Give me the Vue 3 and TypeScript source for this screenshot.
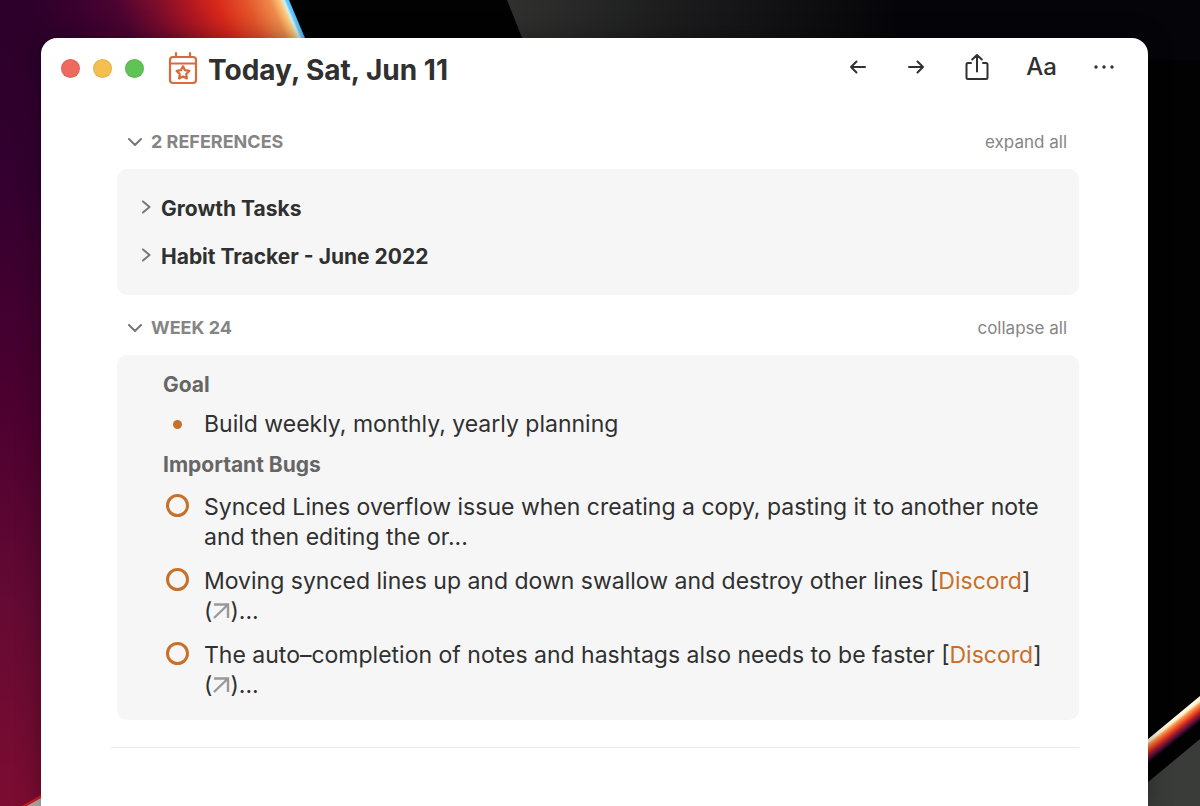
<script setup lang="ts">
import { ref } from 'vue'

interface Task {
  id: string
  text: string
  link: boolean
}

const references: string[] = ['Growth Tasks', 'Habit Tracker - June 2022']

const goals: string[] = ['Build weekly, monthly, yearly planning']

const tasks: Task[] = [
  {
    id: 'task-synced-overflow',
    text: 'Synced Lines overflow issue when creating a copy, pasting it to another note and then editing the or...',
    link: false,
  },
  {
    id: 'task-moving-lines',
    text: 'Moving synced lines up and down swallow and destroy other lines',
    link: true,
  },
  {
    id: 'task-completion',
    text: 'The auto–completion of notes and hashtags also needs to be faster',
    link: true,
  },
]

const done = ref<string[]>([])
const showReferences = ref(true)
const showWeek = ref(true)
</script>

<template>
  <div class="desktop">
    <svg class="wallpaper" viewBox="0 0 1200 806" preserveAspectRatio="none" aria-hidden="true">
      <defs>
        <linearGradient id="base" x1="0" y1="0" x2="0" y2="806" gradientUnits="userSpaceOnUse">
          <stop offset="0" stop-color="#2b0029" />
          <stop offset="0.22" stop-color="#33002f" />
          <stop offset="0.5" stop-color="#4c0030" />
          <stop offset="0.75" stop-color="#640a33" />
          <stop offset="1" stop-color="#7c0c31" />
        </linearGradient>
        <linearGradient id="flare" x1="60" y1="97" x2="289" y2="0" gradientUnits="userSpaceOnUse">
          <stop offset="0" stop-color="#3c0033" stop-opacity="0" />
          <stop offset="0.36" stop-color="#4d0431" />
          <stop offset="0.5" stop-color="#7c0c2b" />
          <stop offset="0.62" stop-color="#ae1722" />
          <stop offset="0.73" stop-color="#d9291b" />
          <stop offset="0.84" stop-color="#e4552b" />
          <stop offset="0.93" stop-color="#ed8b4c" />
          <stop offset="0.965" stop-color="#ffc878" />
          <stop offset="0.98" stop-color="#d8f0f0" />
          <stop offset="0.988" stop-color="#64cfff" />
          <stop offset="1" stop-color="#4cbcf5" />
        </linearGradient>
        <linearGradient id="streak" x1="1148" y1="739" x2="1160" y2="754" gradientUnits="userSpaceOnUse">
          <stop offset="0" stop-color="#fffbe8" />
          <stop offset="0.13" stop-color="#fff0c8" />
          <stop offset="0.25" stop-color="#f89a55" />
          <stop offset="0.45" stop-color="#ee4a20" />
          <stop offset="0.62" stop-color="#b21f26" />
          <stop offset="0.8" stop-color="#57103c" />
          <stop offset="1" stop-color="#020203" />
        </linearGradient>
        <linearGradient id="slab" x1="507" y1="0" x2="900" y2="0" gradientUnits="userSpaceOnUse">
          <stop offset="0" stop-color="#30312f" />
          <stop offset="0.4" stop-color="#1d1d1e" />
          <stop offset="1" stop-color="#050408" />
        </linearGradient>
      </defs>
      <rect width="1200" height="806" fill="#020203" />
      <polygon points="0,0 289,0 628,806 0,806" fill="url(#base)" />
      <polygon points="0,0 289,0 331,100 60,100 0,40" fill="url(#flare)" />
      <polygon points="507,0 1200,0 1200,60 531,60" fill="url(#slab)" />
      <polygon points="1130,754 1200,696 1200,729 1130,787" fill="url(#streak)" />
      <polygon points="1130,797 1200,739 1200,806 1130,806" fill="#3a3c3a" />
      <polygon points="22,806 60,784 60,806" fill="#d31c1c" />
      <polygon points="27,806 60,787 60,806" fill="#a9a9a6" />
    </svg>

    <main class="window">
      <header class="titlebar">
        <div class="lights">
          <button class="light close" type="button" aria-label="Close"></button>
          <button class="light minimise" type="button" aria-label="Minimise"></button>
          <button class="light zoom" type="button" aria-label="Zoom"></button>
        </div>
        <svg class="calendar" viewBox="0 0 30 34" fill="none" stroke="#d96a3b" stroke-width="2.200" aria-hidden="true">
          <rect x="2" y="6" width="26" height="26" rx="3" />
          <path d="M2 12.500H28M8 2V6M22 2V6" stroke-linecap="round" />
          <path
            d="M15 15.200L17 19.200L21.400 19.900L18.200 23L18.900 27.400L15 25.400L11.100 27.400L11.800 23L8.600 19.900L13 19.200Z"
            stroke-linejoin="round"
          />
        </svg>
        <h1 class="title">Today, Sat, Jun 11</h1>
        <nav class="tools" aria-label="Note tools">
          <button class="tool" type="button" aria-label="Back">
            <svg class="arrow" viewBox="0 0 18 18" aria-hidden="true">
              <path d="M16 9H2M7.500 3.500L2 9L7.500 14.500" />
            </svg>
          </button>
          <button class="tool" type="button" aria-label="Forward">
            <svg class="arrow" viewBox="0 0 18 18" aria-hidden="true">
              <path d="M2 9H16M10.500 3.500L16 9L10.500 14.500" />
            </svg>
          </button>
          <button class="tool share" type="button" aria-label="Share">
            <svg viewBox="0 0 24 28" aria-hidden="true">
              <path d="M6 10H3Q1.500 10 1.500 11.500V24.500Q1.500 26 3 26H21Q22.500 26 22.500 24.500V11.500Q22.500 10 21 10H18M12 18.500V2M7.200 6.500L12 2L16.800 6.500" />
            </svg>
          </button>
          <button class="tool letters" type="button">Aa</button>
          <button class="tool more" type="button" aria-label="More">
            <svg viewBox="0 0 20 4" aria-hidden="true">
              <circle cx="2" cy="2" r="1.700" />
              <circle cx="10" cy="2" r="1.700" />
              <circle cx="18" cy="2" r="1.700" />
            </svg>
          </button>
        </nav>
      </header>

      <div class="content">
        <section>
          <div class="section-head">
            <button class="fold" type="button" :aria-expanded="showReferences" @click="showReferences = !showReferences">
              <svg viewBox="0 0 14 8" aria-hidden="true"><path d="M1 1L7 7L13 1" /></svg>
              2 REFERENCES
            </button>
            <button class="all" type="button">expand all</button>
          </div>
          <div v-if="showReferences" class="panel references">
            <button v-for="name in references" :key="name" class="reference" type="button">
              <svg viewBox="0 0 9 14" aria-hidden="true"><path d="M1 1.500L7.500 7L1 12.500" /></svg>
              {{ name }}
            </button>
          </div>
        </section>

        <section>
          <div class="section-head">
            <button class="fold" type="button" :aria-expanded="showWeek" @click="showWeek = !showWeek">
              <svg viewBox="0 0 14 8" aria-hidden="true"><path d="M1 1L7 7L13 1" /></svg>
              WEEK 24
            </button>
            <button class="all" type="button">collapse all</button>
          </div>
          <div v-if="showWeek" class="panel week">
            <h2>Goal</h2>
            <ul class="goals">
              <li v-for="goal in goals" :key="goal">{{ goal }}</li>
            </ul>
            <h2>Important Bugs</h2>
            <ul class="tasks">
              <li v-for="task in tasks" :key="task.id">
                <input :id="task.id" v-model="done" type="checkbox" :value="task.id" />
                <label :for="task.id">
                  {{ task.text }}
                  <template v-if="task.link">[<a href="#discord">Discord</a>]<wbr /><span class="jump">(<svg viewBox="0 0 18 16" aria-hidden="true"><path d="M2 1.500H16V15M16 1.500L2 15" /></svg>)...</span></template>
                </label>
              </li>
            </ul>
          </div>
        </section>
        <hr />
      </div>
    </main>
  </div>
</template>

<style>
body {
  margin: 0;
  background: #000;
}
</style>

<style scoped>
.desktop {
  position: relative;
  display: flex;
  box-sizing: border-box;
  min-height: 100vh;
  padding: 38px 52px 0 41px;
  font-family: Inter, "Liberation Sans", sans-serif;
  color: #303030;
}

.wallpaper {
  position: absolute;
  inset: 0;
  width: 100%;
  height: 100%;
}

.window {
  position: relative;
  flex: 1;
  min-width: 0;
  background: #fff;
  border-radius: 16px 16px 0 0;
  box-shadow: 0 0 24px rgba(0, 0, 0, 0.35);
}

button {
  padding: 0;
  border: 0;
  background: none;
  color: inherit;
  font: inherit;
}

.titlebar {
  display: flex;
  align-items: center;
  height: 60px;
  padding: 0 34px 0 20px;
}

.lights {
  display: flex;
  gap: 13px;
}

.light {
  box-sizing: border-box;
  width: 19px;
  height: 19px;
  border: 1px solid rgba(0, 0, 0, 0.08);
  border-radius: 50%;
}

.close {
  background: #ee6a5f;
}

.minimise {
  background: #f5bf4f;
}

.zoom {
  background: #5fc454;
}

.calendar {
  width: 30px;
  height: 34px;
  margin-left: 24px;
}

.title {
  margin: 4px 0 0 10px;
  font-size: 28px;
  line-height: 34px;
  font-weight: 700;
  white-space: nowrap;
}

.tools {
  display: flex;
  align-items: center;
  gap: 37px;
  margin: 0 0 3px auto;
}

.tool {
  display: flex;
  align-items: center;
  justify-content: center;
}

.tool svg {
  fill: none;
  stroke: #303030;
  stroke-width: 2;
  stroke-linecap: round;
  stroke-linejoin: round;
}

.tool .arrow {
  width: 18px;
  height: 18px;
  margin-right: 3px;
}

.share svg {
  width: 24px;
  height: 28px;
}

.letters {
  font-size: 24px;
  line-height: 30px;
  font-weight: 500;
}

.tool.more svg {
  width: 20px;
  height: 4px;
  fill: #303030;
  stroke: none;
}

.content {
  padding: 17px 69px 0 76px;
}

section {
  margin-bottom: 6px;
}

.section-head {
  display: flex;
  align-items: center;
  justify-content: space-between;
  height: 54px;
  padding: 0 12px 0 11px;
  color: #858585;
  font-size: 17px;
  line-height: 22px;
}

.fold {
  display: flex;
  align-items: center;
  gap: 9px;
  font-size: 18px;
  font-weight: 700;
}

.fold svg {
  width: 14px;
  height: 8px;
}

.fold svg,
.reference svg {
  fill: none;
  stroke: #777;
  stroke-width: 2;
  stroke-linecap: round;
  stroke-linejoin: round;
}

.panel {
  background: #f6f6f6;
  border-radius: 10px;
}

.references {
  display: flex;
  flex-direction: column;
  align-items: flex-start;
  padding: 15px 25px;
}

.reference {
  display: flex;
  align-items: center;
  gap: 10px;
  height: 48px;
  font-size: 21px;
  font-weight: 700;
}

.reference svg {
  width: 9px;
  height: 14px;
  margin-bottom: 3px;
}

.week {
  padding: 15px 32px 20px 46px;
  font-size: 23px;
  line-height: 30px;
}

h2 {
  margin: 0;
  color: #666;
  font-size: 21px;
  line-height: 30px;
  font-weight: 700;
}

ul {
  margin: 0;
  padding: 0;
  list-style: none;
}

.goals {
  padding: 9px 0 11px;
}

.goals li {
  display: flex;
  align-items: center;
  gap: 22px;
  padding-left: 10px;
}

.goals li::before {
  content: "";
  width: 9px;
  height: 9px;
  border-radius: 50%;
  background: #c8702a;
}

.tasks {
  display: flex;
  flex-direction: column;
  gap: 14px;
  padding-top: 12px;
}

.tasks li {
  display: flex;
  align-items: flex-start;
  gap: 15px;
  padding-left: 3px;
}

.tasks input {
  appearance: none;
  flex: none;
  box-sizing: border-box;
  width: 23px;
  height: 23px;
  margin: 2px 0 0;
  border: 3px solid #c8702a;
  border-radius: 50%;
}

.tasks input:checked {
  background: #c8702a;
}

.tasks a {
  color: #c8702a;
  text-decoration: none;
}

.jump {
  white-space: nowrap;
}

.jump svg {
  width: 18px;
  height: 16px;
  fill: none;
  stroke: #999;
  stroke-width: 2.400;
}

hr {
  height: 1px;
  margin: 27px 0 0 -6px;
  border: 0;
  background: #e9e9e9;
}
</style>
